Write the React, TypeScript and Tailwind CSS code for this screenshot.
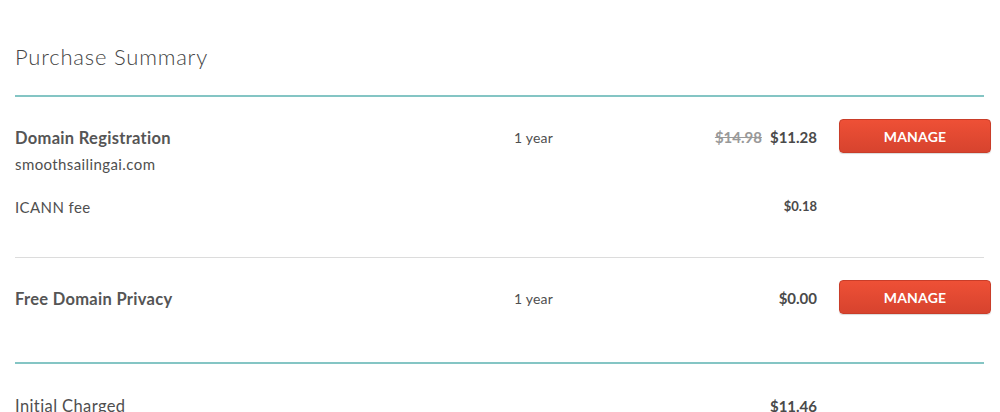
const font = { fontFamily: 'Lato, "Open Sans", sans-serif' };

function ManageButton() {
  return (
    <button className="w-[152px] h-[34px] shrink-0 rounded-[4px] border border-[#c93d29] bg-gradient-to-b from-[#ee5036] to-[#d7432e] text-white text-[14px] font-bold tracking-[0.2px] uppercase shadow-[0_1px_1px_rgba(0,0,0,0.15)]">
      Manage
    </button>
  );
}

export default function App() {
  return (
    <div className="w-[1000px] h-[412px] overflow-hidden bg-white text-[#4f4f4f]" style={font}>
      <div className="pl-[15px] pr-[16px]">
        <h1 className="pt-[43px] text-[22px] leading-[28px] font-light tracking-[0.8px] text-[#444]">Purchase Summary</h1>
        <div className="mt-[24px] border-t-2 border-[#84c5c4]" />

        {/* Domain registration */}
        <div className="pt-[22px] pb-[40px] border-b border-[#dcdcdc]">
          <div className="flex items-center h-[34px] -mr-[7px]">
            <div className="w-[499px] pt-[5px] text-[16.5px] font-bold tracking-[0.3px] text-[#555]">Domain Registration</div>
            <div className="flex-1 pt-[2px] text-[14px] tracking-[0.2px]">1 year</div>
            <div className="flex items-baseline gap-[8px] pt-[3px] text-[15px] font-bold">
              <span className="line-through text-[#999]">$14.98</span>
              <span className="text-[#4a4a4a]">$11.28</span>
            </div>
            <div className="w-[22px]" />
            <ManageButton />
          </div>
          <div className="h-[20px] mt-[1px] text-[15px] leading-[20px] tracking-[0.4px]">smoothsailingai.com</div>
          <div className="flex items-center h-[20px] mt-[23px] -mr-[7px]">
            <div className="flex-1 text-[15px] tracking-[0.4px]">ICANN fee</div>
            <div className="text-[13px] font-bold text-[#4a4a4a]">$0.18</div>
            <div className="w-[174px]" />
          </div>
        </div>

        {/* Domain privacy */}
        <div className="pt-[22px] pb-[48px] border-b-2 border-[#84c5c4]">
          <div className="flex items-center h-[34px] -mr-[7px]">
            <div className="w-[499px] pt-[4px] text-[16.5px] font-bold tracking-[0.3px] text-[#555]">Free Domain Privacy</div>
            <div className="flex-1 pt-[2px] text-[14px] tracking-[0.2px]">1 year</div>
            <div className="pt-[3px] text-[15px] font-bold text-[#4a4a4a]">$0.00</div>
            <div className="w-[22px]" />
            <ManageButton />
          </div>
        </div>

        {/* Totals */}
        <div className="flex items-center h-[20px] mt-[32px] -mr-[7px]">
          <div className="flex-1 text-[16.5px] tracking-[0.4px]">Initial Charged</div>
          <div className="text-[15px] font-bold text-[#4a4a4a]">$11.46</div>
          <div className="w-[174px]" />
        </div>
      </div>
    </div>
  );
}
